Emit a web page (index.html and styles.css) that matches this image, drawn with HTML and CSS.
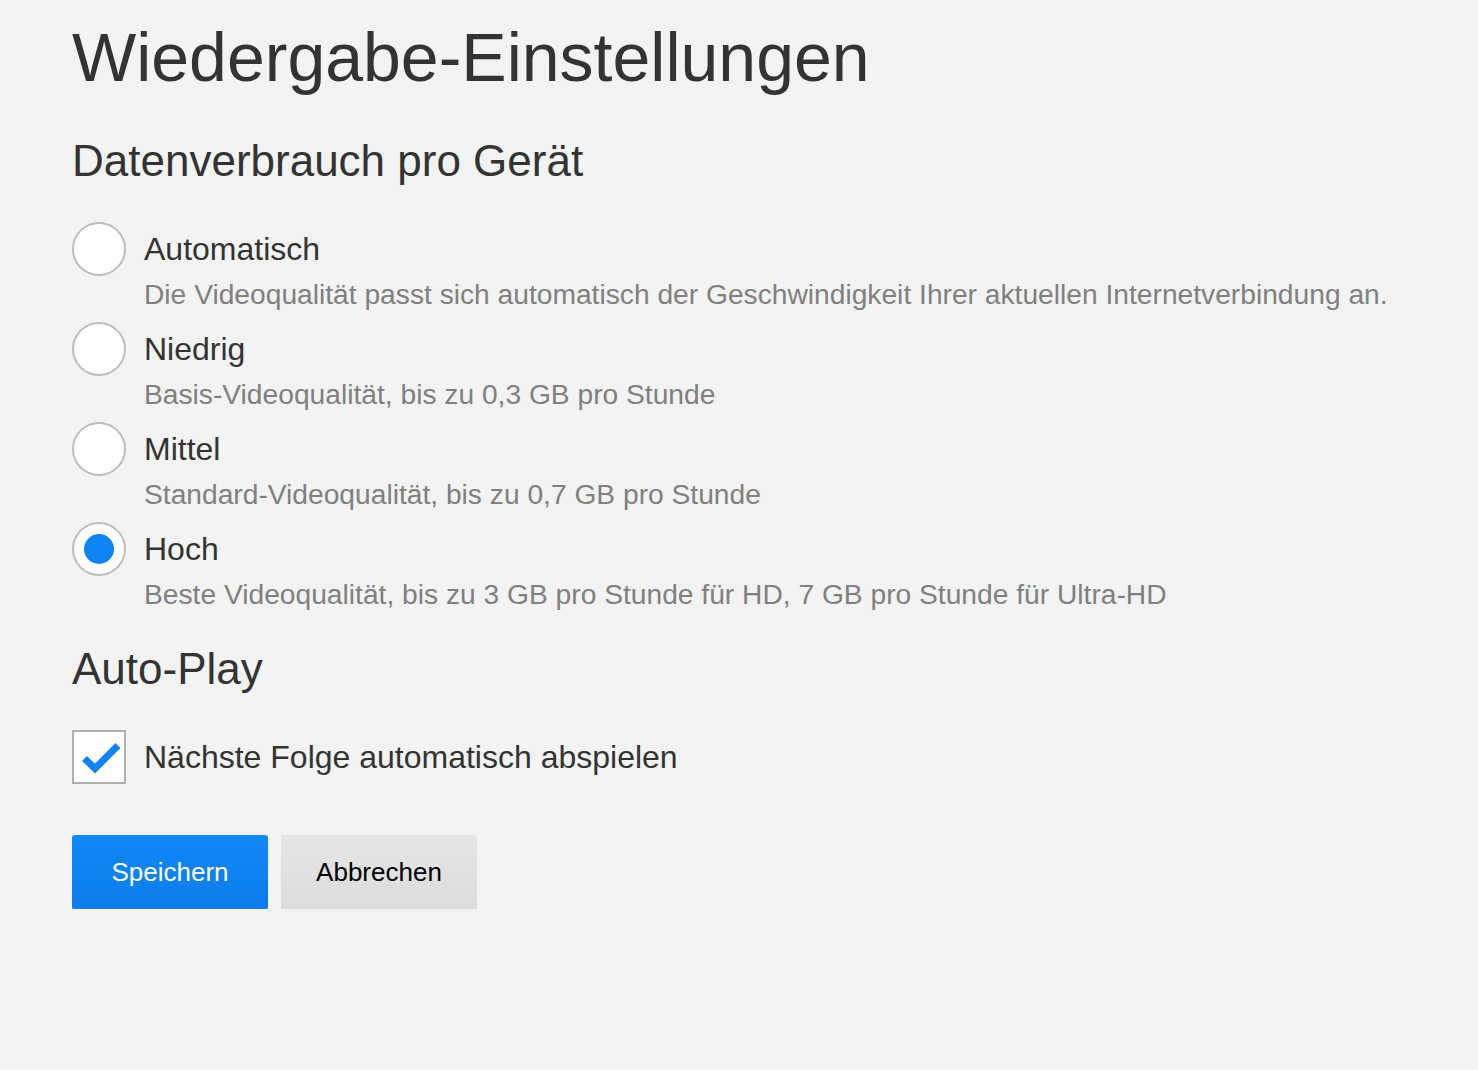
FILE: index.html
```html
<!DOCTYPE html>
<html lang="de">
<head>
<meta charset="utf-8">
<title>Wiedergabe-Einstellungen</title>
<link rel="stylesheet" href="styles.css">
</head>
<body>
<main class="page">
  <h1 class="title">Wiedergabe-Einstellungen</h1>

  <h2 class="section-title">Datenverbrauch pro Gerät</h2>
  <div class="options">
    <div class="option">
      <span class="radio"></span>
      <span class="option-label">Automatisch</span>
      <span class="option-desc">Die Videoqualität passt sich automatisch der Geschwindigkeit Ihrer aktuellen Internetverbindung an.</span>
    </div>
    <div class="option">
      <span class="radio"></span>
      <span class="option-label">Niedrig</span>
      <span class="option-desc">Basis-Videoqualität, bis zu 0,3 GB pro Stunde</span>
    </div>
    <div class="option">
      <span class="radio"></span>
      <span class="option-label">Mittel</span>
      <span class="option-desc">Standard-Videoqualität, bis zu 0,7 GB pro Stunde</span>
    </div>
    <div class="option">
      <span class="radio radio-checked"><span class="radio-dot"></span></span>
      <span class="option-label">Hoch</span>
      <span class="option-desc">Beste Videoqualität, bis zu 3 GB pro Stunde für HD, 7 GB pro Stunde für Ultra-HD</span>
    </div>
  </div>

  <h2 class="section-title section-autoplay">Auto-Play</h2>
  <div class="check-row">
    <span class="checkbox">
      <svg width="50" height="50" viewBox="0 0 50 50" aria-hidden="true">
        <path d="M10.5 26.5 L21 36.5 L44 13.5" fill="none" stroke="#0f84f4" stroke-width="7" stroke-linejoin="miter"/>
      </svg>
    </span>
    <span class="option-label">Nächste Folge automatisch abspielen</span>
  </div>

  <div class="actions">
    <button class="btn btn-blue">Speichern</button>
    <button class="btn btn-gray">Abbrechen</button>
  </div>
</main>
</body>
</html>
```

FILE: styles.css
```css
html, body {
  margin: 0;
  padding: 0;
  background: #f3f3f3;
}

body {
  font-family: "Liberation Sans", Arial, Helvetica, sans-serif;
  color: #333333;
}

.page {
  padding: 23px 72px 0 72px;
}

.title {
  margin: 0;
  font-size: 68px;
  line-height: 68px;
  font-weight: 400;
  color: #333333;
}

.section-title {
  margin: 48px 0 39px 0;
  font-size: 44px;
  line-height: 44px;
  font-weight: 400;
  color: #333333;
}

.section-autoplay {
  margin-top: 38px;
}

.options {
  display: flex;
  flex-direction: column;
  gap: 13px;
}

.option {
  display: grid;
  grid-template-columns: 54px 1fr;
  column-gap: 18px;
  row-gap: 4px;
}

.radio {
  box-sizing: border-box;
  width: 54px;
  height: 54px;
  border-radius: 50%;
  border: 2px solid #bdbdbd;
  background: #ffffff;
  display: flex;
  align-items: center;
  justify-content: center;
}

.radio-dot {
  width: 30px;
  height: 30px;
  border-radius: 50%;
  background: #0f84f4;
}

.option-label {
  font-size: 32px;
  line-height: 54px;
  color: #333333;
  white-space: nowrap;
}

.option-desc {
  grid-column: 2;
  font-size: 28.2px;
  line-height: 29px;
  color: #808080;
  white-space: nowrap;
}

.check-row {
  display: flex;
  align-items: center;
  gap: 18px;
}

.checkbox {
  box-sizing: border-box;
  width: 54px;
  height: 54px;
  border: 2px solid #b0b0b0;
  background: #ffffff;
  display: flex;
}

.checkbox svg {
  display: block;
}

.actions {
  display: flex;
  gap: 13px;
  margin-top: 51px;
}

.btn {
  box-sizing: border-box;
  width: 196px;
  height: 74px;
  border: 0;
  border-radius: 3px;
  font-family: "Liberation Sans", Arial, Helvetica, sans-serif;
  font-size: 26px;
  padding: 0;
  cursor: pointer;
}

.btn-blue {
  color: #ffffff;
  background: linear-gradient(to bottom, #1088fa, #0b7de9);
  box-shadow: 0 2px 0 rgba(0, 0, 0, 0.55);
}

.btn-gray {
  color: #000000;
  background: linear-gradient(to bottom, #e6e6e6, #dcdcdc);
  box-shadow: 0 2px 0 rgba(0, 0, 0, 0.18);
}
```
